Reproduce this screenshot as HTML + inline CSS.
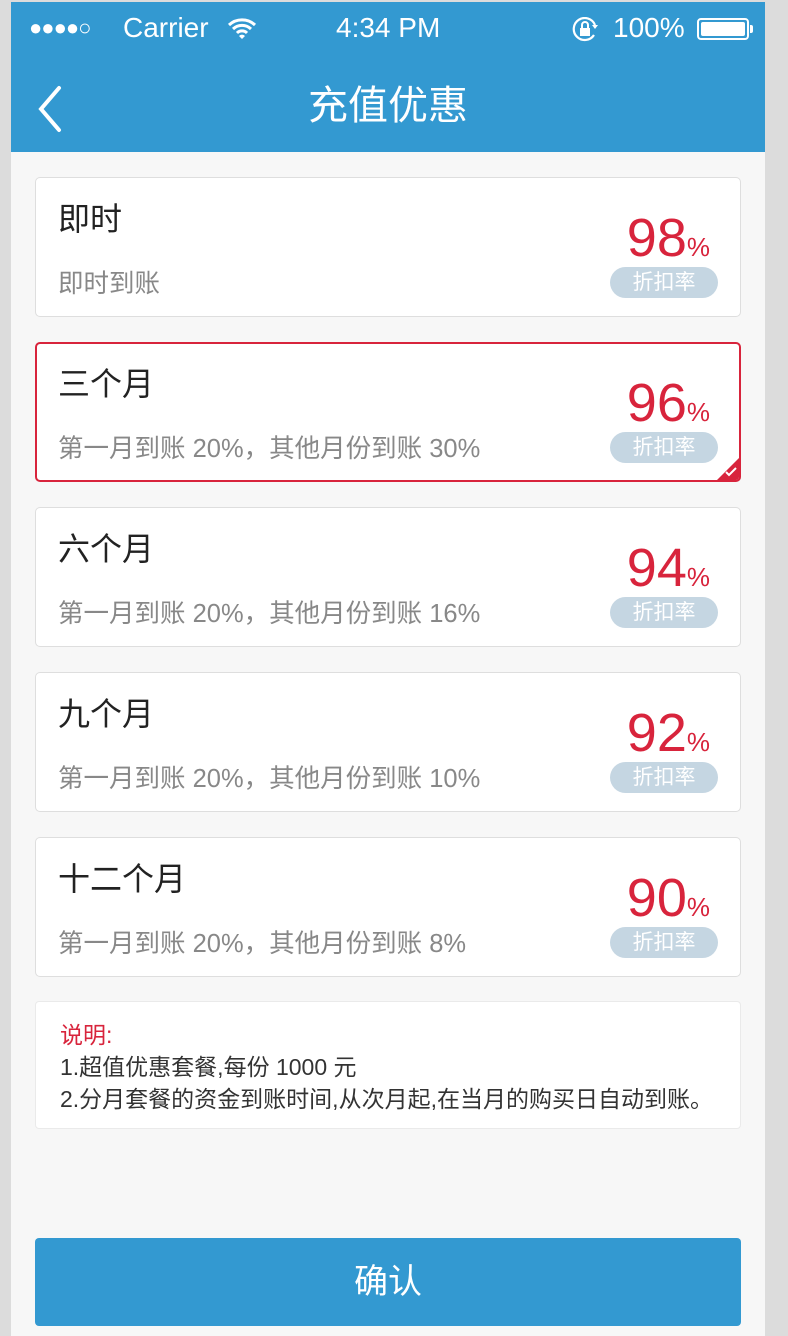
<!DOCTYPE html>
<html><head><meta charset="utf-8"><style>
*{margin:0;padding:0;box-sizing:border-box}
body{width:788px;height:1336px;background:#dcdcdc;position:relative;overflow:hidden;font-family:"Liberation Sans","Noto Sans CJK SC",sans-serif}
.page{position:absolute;left:11px;top:2px;width:754px;height:1334px;background:#f7f7f7}
.hdr{position:absolute;left:0;top:0;width:754px;height:150px;background:#3399d1;color:#fff}
.sb{position:absolute;top:10px;font-size:28px}
.title{position:absolute;left:0;right:0;top:78px;text-align:center;font-size:40px;line-height:52px}
.card{position:absolute;left:24px;width:706px;height:140px;background:#fff;border:1px solid #dedede;border-radius:5px;overflow:hidden}
.card.sel{border:2px solid #d8243c}
.t{position:absolute;left:22px;top:18px;font-size:32px;line-height:46px;color:#222}
.s{position:absolute;left:22px;top:88px;font-size:25.5px;line-height:36px;color:#888}
.n{position:absolute;right:30px;top:30px;font-size:54px;color:#d8243c;line-height:60px}
.n span{font-size:26px}
.b{position:absolute;right:22px;top:89px;width:108px;height:31px;border-radius:16px;background:#c5d6e2;color:#fff;font-size:21px;text-align:center;line-height:31px}
.tick{position:absolute;right:-1px;bottom:-1px;width:0;height:0;border-left:24px solid transparent;border-bottom:24px solid #d8243c}
.notes{position:absolute;left:24px;top:999px;width:706px;height:128px;background:#fff;border:1px solid #eaeaea;border-radius:4px;font-size:23px;color:#333;padding:17px 0 0 24px;line-height:32px}
.btn{position:absolute;left:24px;top:1236px;width:706px;height:88px;background:#3399d1;border-radius:4px;color:#fff;font-size:34px;text-align:center;line-height:88px}
</style></head><body>
<div class="page">
<div class="hdr">
<div class="sb" style="left:18px;top:13px;font-size:22px;letter-spacing:-1px">●●●●○</div>
<div class="sb" style="left:112px">Carrier</div>
<svg style="position:absolute;left:216px;top:14px" width="30" height="24" viewBox="0 0 30 24"><path d="M2 9a19 19 0 0 1 26 0M6 13a13 13 0 0 1 18 0M10 17a7 7 0 0 1 10 0" stroke="#fff" stroke-width="3" fill="none"/><path d="M12 20l3 3 3-3a4 4 0 0 0-6 0z" fill="#fff"/></svg>
<div class="sb" style="left:325px">4:34 PM</div>
<svg style="position:absolute;left:561px;top:15px" width="28" height="26" viewBox="0 0 28 26"><path d="M22 18A11 11 0 1 1 23 8" stroke="#fff" stroke-width="2.2" fill="none"/><path d="M20 8h6l-3 4z" fill="#fff"/><rect x="8" y="11" width="10" height="8" fill="#fff"/><path d="M10 11V8a3 3 0 0 1 6 0v3" stroke="#fff" stroke-width="2" fill="none"/></svg>
<div class="sb" style="left:602px">100%</div>
<div style="position:absolute;left:686px;top:16px;width:52px;height:22px;border:2px solid #fff;border-radius:4px;padding:2px"><div style="background:#fff;width:100%;height:100%;border-radius:2px"></div></div>
<div style="position:absolute;left:739px;top:23px;width:3px;height:8px;background:#fff;border-radius:0 2px 2px 0"></div>
<svg style="position:absolute;left:24px;top:82px" width="30" height="50" viewBox="0 0 30 50"><path d="M24 4L6 25l18 21" stroke="#fff" stroke-width="4" fill="none" stroke-linecap="round"/></svg>
<div class="title">充值优惠</div>
</div>

<div class="card" style="top:175px"><div class="t">即时</div><div class="s">即时到账</div><div class="n">98<span>%</span></div><div class="b">折扣率</div></div>
<div class="card sel" style="top:340px"><div class="t" style="left:21px;top:17px">三个月</div><div class="s" style="left:21px;top:87px">第一月到账 20%，其他月份到账 30%</div><div class="n" style="right:29px;top:29px">96<span>%</span></div><div class="b" style="right:21px;top:88px">折扣率</div><div class="tick"></div><svg style="position:absolute;right:2px;bottom:3px" width="12" height="10" viewBox="0 0 12 10"><path d="M1 5l3 3 7-7" stroke="#fff" stroke-width="2" fill="none"/></svg></div>
<div class="card" style="top:505px"><div class="t">六个月</div><div class="s">第一月到账 20%，其他月份到账 16%</div><div class="n">94<span>%</span></div><div class="b">折扣率</div></div>
<div class="card" style="top:670px"><div class="t">九个月</div><div class="s">第一月到账 20%，其他月份到账 10%</div><div class="n">92<span>%</span></div><div class="b">折扣率</div></div>
<div class="card" style="top:835px"><div class="t">十二个月</div><div class="s">第一月到账 20%，其他月份到账 8%</div><div class="n">90<span>%</span></div><div class="b">折扣率</div></div>

<div class="notes"><div style="color:#d8243c">说明:</div><div>1.超值优惠套餐,每份 1000 元</div><div>2.分月套餐的资金到账时间,从次月起,在当月的购买日自动到账。</div></div>
<div class="btn">确认</div>
</div>
</body></html>
